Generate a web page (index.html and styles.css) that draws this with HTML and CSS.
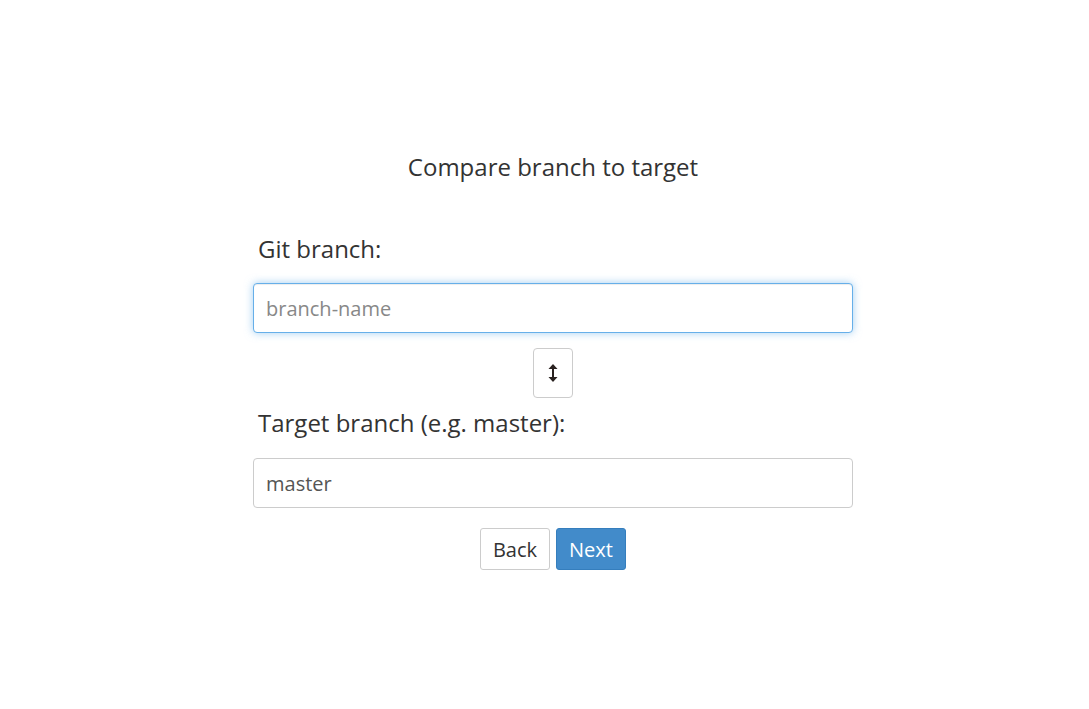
FILE: index.html
```html
<!DOCTYPE html>
<html>
<head>
<meta charset="utf-8">
<link rel="stylesheet" href="styles.css">
</head>
<body>
<div class="page">
  <div class="panel">
    <h1 class="title">Compare branch to target</h1>
    <label class="label">Git branch:</label>
    <input class="field focused" type="text" placeholder="branch-name">
    <div class="swap-row">
      <button class="swap" type="button" aria-label="swap">
        <svg width="12" height="22" viewBox="0 0 12 22">
          <path d="M6 3 L6 19" stroke="#2a2220" stroke-width="2" fill="none"/>
          <path d="M1.5 7 L6 2 L10.5 7 Z" fill="#2a2220"/>
          <path d="M1.5 15 L6 20 L10.5 15 Z" fill="#2a2220"/>
        </svg>
      </button>
    </div>
    <label class="label">Target branch (e.g. master):</label>
    <input class="field target" type="text" value="master">
    <div class="actions">
      <button class="btn" type="button">Back</button>
      <button class="btn primary" type="button">Next</button>
    </div>
  </div>
</div>
</body>
</html>
```
FILE: styles.css
```css
html, body {
  margin: 0;
  padding: 0;
  background: #fff;
  font-family: "Open Sans", "Noto Sans", sans-serif;
  color: #333;
}
.page {
  display: flex;
  justify-content: center;
  padding-left: 17px;
  padding-top: 150px;
}
.panel {
  width: 600px;
  display: flex;
  flex-direction: column;
}
.title {
  margin: 0;
  font-weight: 400;
  font-size: 24px;
  line-height: 34px;
  text-align: center;
  color: #333;
}
.label {
  font-size: 24px;
  line-height: 30px;
  margin: 50px 0 0 5px;
  color: #333;
}
.label + .field {
  margin-top: 19px;
}
.label + .field.target {
  margin-top: 20px;
}
.swap-row + .label {
  margin-top: 10px;
}
.field {
  box-sizing: border-box;
  height: 50px;
  width: 600px;
  border: 1px solid #ccc;
  border-radius: 4px;
  padding: 0 12px;
  font-family: "Open Sans", "Noto Sans", sans-serif;
  font-size: 20px;
  color: #555;
  outline: none;
}
.field::placeholder {
  color: #888;
}
.field.focused {
  border-color: #66afe9;
  box-shadow: inset 0 1px 1px rgba(0,0,0,.075), 0 0 8px rgba(102,175,233,.6);
}
.swap-row {
  display: flex;
  justify-content: center;
  margin-top: 15px;
}
.swap {
  box-sizing: border-box;
  width: 40px;
  height: 50px;
  border: 1px solid #ccc;
  border-radius: 4px;
  background: #fff;
  display: flex;
  align-items: center;
  justify-content: center;
  padding: 0;
}
.actions {
  display: flex;
  justify-content: center;
  gap: 6px;
  margin-top: 20px;
}
.btn {
  box-sizing: border-box;
  width: 70px;
  height: 42px;
  border: 1px solid #ccc;
  border-radius: 3px;
  background: #fff;
  color: #333;
  font-family: "Open Sans", "Noto Sans", sans-serif;
  font-size: 20px;
  padding: 0;
}
.btn.primary {
  background: #428bca;
  border-color: #357ebd;
  color: #fff;
}
```
